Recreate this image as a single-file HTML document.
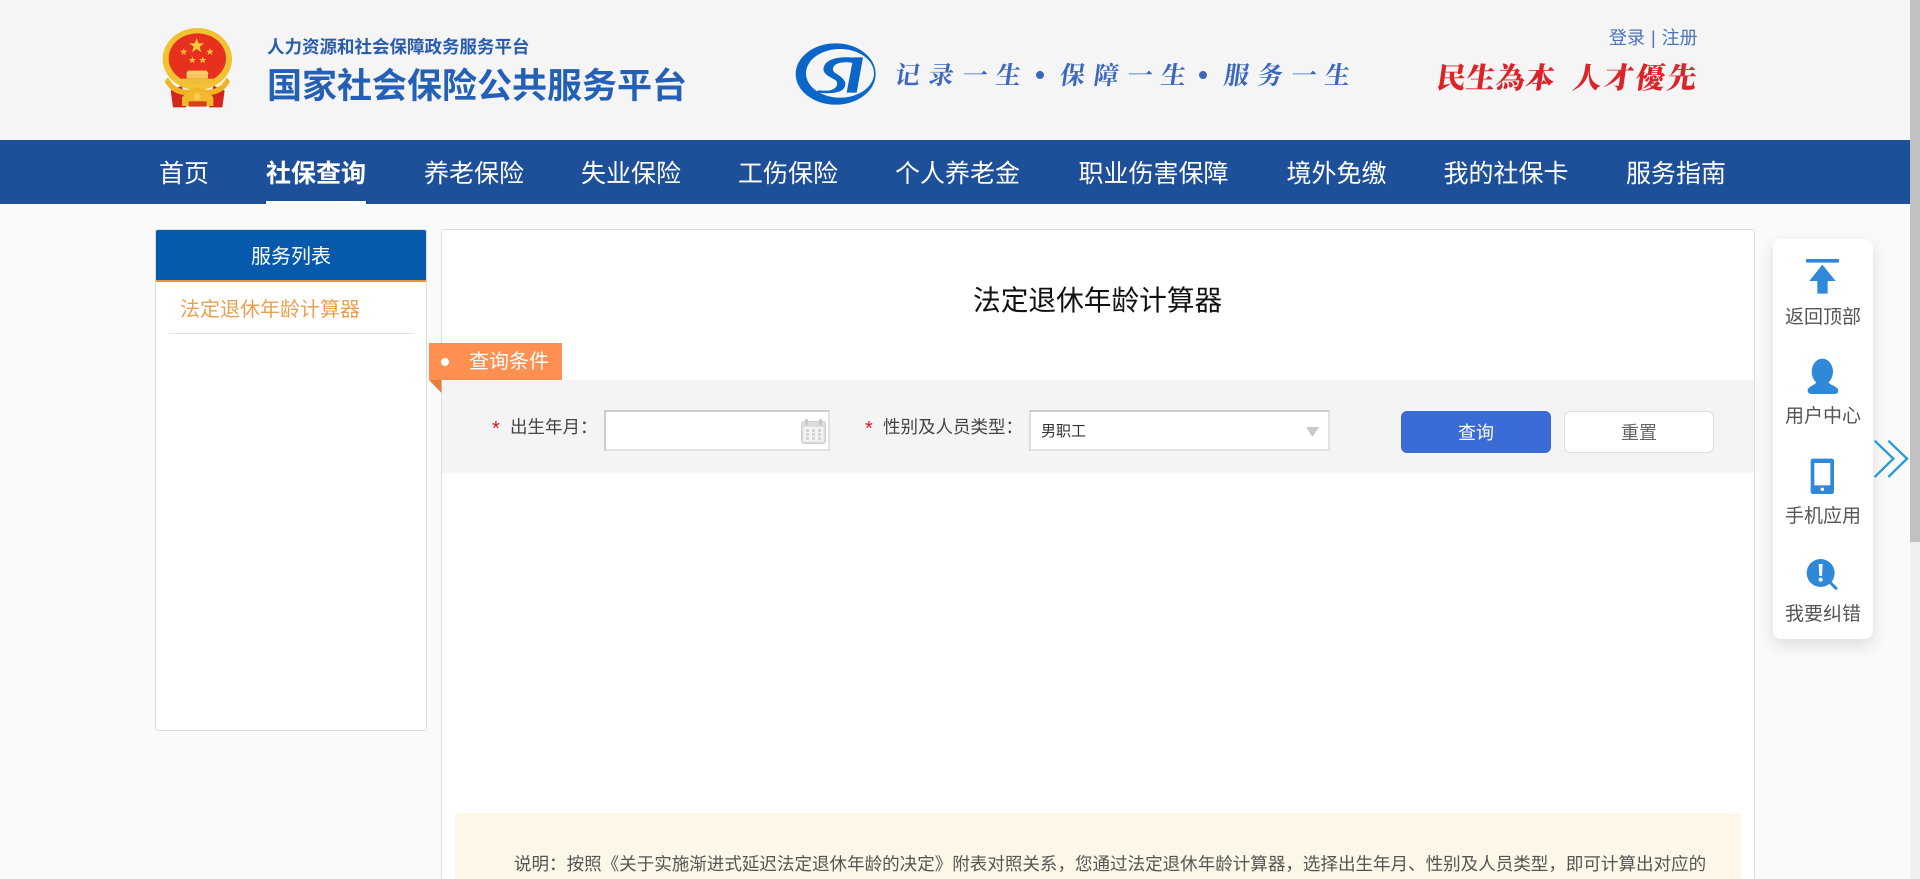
<!DOCTYPE html>
<html lang="zh-CN">
<head>
<meta charset="utf-8">
<title>法定退休年龄计算器</title>
<style>
html,body{margin:0;padding:0;width:1920px;height:879px;overflow:hidden;background:#fafafa;}
body{position:relative;font-family:"Liberation Sans","Noto Sans CJK SC",sans-serif;color:#444;}
.a{position:absolute;box-sizing:border-box;}
.t{position:absolute;white-space:nowrap;line-height:1;}
.n{top:162px;font-size:25px;color:#fff;}
.sl{top:64px;font-size:25px;font-weight:700;color:#3d68bf;font-family:'Liberation Serif','Noto Serif CJK SC',serif;letter-spacing:8.7px;transform:skewX(-8deg);}
.rd{top:65px;font-size:29px;font-weight:900;color:#dd2228;font-family:'Liberation Serif','Noto Serif CJK TC',serif;transform:skewX(-8deg);}
svg{position:absolute;overflow:visible;display:block;}
</style>
</head>
<body>
<!-- header -->
<div class="a" style="left:0;top:0;width:1920px;height:140px;background:#f5f5f5;"></div>

<!-- emblem -->
<svg style="left:158px;top:24px;" width="80" height="88" viewBox="0 0 240 264">
  <path d="M38 200 L72 185 L85 250 L45 250Z" fill="#d5261c"/>
  <path d="M200 200 L166 185 L153 250 L193 250Z" fill="#d5261c"/>
  <ellipse cx="118" cy="105" rx="104" ry="93" fill="#f1c232"/>
  <ellipse cx="118" cy="103" rx="86" ry="75" fill="#e8301f"/>
  <polygon points="116,42 122,58 139,58 125,68 130,85 116,75 102,85 107,68 93,58 110,58" fill="#f6c93b"/>
  <polygon points="77,72 80,80 88,80 82,85 84,93 77,88 70,93 72,85 66,80 74,80" fill="#f3bd35"/>
  <polygon points="156,72 159,80 167,80 161,85 163,93 156,88 149,93 151,85 145,80 153,80" fill="#f3bd35"/>
  <polygon points="103,97 106,105 114,105 108,110 110,118 103,113 96,118 98,110 92,105 100,105" fill="#f3bd35"/>
  <polygon points="134,97 137,105 145,105 139,110 141,118 134,113 127,118 129,110 123,105 131,105" fill="#f3bd35"/>
  <path d="M90 140 H146 L152 150 H84Z" fill="#f6cf6a"/>
  <rect x="86" y="150" width="64" height="14" fill="#f4c75e"/>
  <rect x="70" y="164" width="96" height="14" fill="#f3bd3c"/>
  <path d="M30 160 C55 205 95 200 118 191 C142 200 182 205 206 160 L216 173 C190 220 145 217 118 209 C92 217 46 220 20 173Z" fill="#eeb426"/>
  <path d="M72 220 C90 196 150 196 166 220 L166 246 H72Z" fill="#f1ba2c"/>
  <path d="M92 232 H146 V248 H92Z" fill="#dd3a20"/>
  <circle cx="118" cy="218" r="10" fill="#f6cc55"/>
</svg>

<div class="t" style="left:267px;top:39px;font-size:17.5px;font-weight:700;color:#2a5cae;">人力资源和社会保障政务服务平台</div>
<div class="t" style="left:267px;top:69px;font-size:35px;font-weight:700;color:#2460b6;">国家社会保险公共服务平台</div>

<!-- SI logo -->
<svg style="left:790px;top:39px;" width="95" height="75" viewBox="0 0 285 225">
  <path fill-rule="evenodd" d="M17 105 A120 92 0 1 0 257 105 A120 92 0 1 0 17 105Z M48 103 A102 73 0 1 1 252 103 A102 73 0 1 1 48 103Z" fill="#0a66c8"/>
  <path d="M192 56 C150 52 112 58 102 82 C94 104 118 112 134 122 C148 130 142 150 120 154 C108 156 90 154 84 154 L80 161 C110 164 148 164 160 150 C178 128 152 112 136 102 C122 92 128 72 160 70 C172 69 182 70 188 72Z" fill="#0a66c8"/>
  <path d="M190 55 L219 55 L200 161 L170 161Z" fill="#0a66c8"/>
</svg>
<div class="t sl" style="left:895px;">记录一生</div>
<div class="a" style="left:1036px;top:71px;width:8px;height:8px;border-radius:50%;background:#3d68bf;"></div>
<div class="t sl" style="left:1060px;">保障一生</div>
<div class="a" style="left:1199px;top:71px;width:8px;height:8px;border-radius:50%;background:#3d68bf;"></div>
<div class="t sl" style="left:1224px;">服务一生</div>

<div class="t rd" style="left:1437px;letter-spacing:.5px;">民生為本</div>
<div class="t rd" style="left:1573px;letter-spacing:2.5px;">人才優先</div>

<div class="t" style="left:1609px;top:29px;font-size:18px;color:#4a72bd;word-spacing:1px;">登录 | 注册</div>

<!-- nav -->
<div class="a" style="left:0;top:140px;width:1920px;height:64px;background:#1e4f99;"></div>
<div class="t n" style="left:159px;">首页</div>
<div class="t n" style="left:266px;font-weight:700;">社保查询</div>
<div class="a" style="left:266px;top:201px;width:100px;height:3px;background:#fff;"></div>
<div class="t n" style="left:424px;">养老保险</div>
<div class="t n" style="left:581px;">失业保险</div>
<div class="t n" style="left:738px;">工伤保险</div>
<div class="t n" style="left:895px;">个人养老金</div>
<div class="t n" style="left:1078.5px;">职业伤害保障</div>
<div class="t n" style="left:1286.5px;">境外免缴</div>
<div class="t n" style="left:1443.5px;">我的社保卡</div>
<div class="t n" style="left:1626px;">服务指南</div>

<!-- sidebar -->
<div class="a" style="left:155px;top:229px;width:272px;height:502px;background:#fff;border:1px solid #ddd;border-radius:3px;"></div>
<div class="a" style="left:156px;top:230px;width:270px;height:50px;background:#0759ac;border-radius:2px 2px 0 0;"></div>
<div class="a" style="left:156px;top:280px;width:270px;height:2px;background:#e09a3c;"></div>
<div class="t" style="left:251px;top:247px;font-size:20px;color:#fff;">服务列表</div>
<div class="t" style="left:180px;top:300px;font-size:20px;color:#e8a050;">法定退休年龄计算器</div>
<div class="a" style="left:169px;top:333px;width:245px;height:1px;background:#e2e2e2;"></div>

<!-- main -->
<div class="a" style="left:441px;top:229px;width:1314px;height:670px;background:#fff;border:1px solid #ddd;border-radius:3px;"></div>
<div class="t" style="left:973px;top:287px;font-size:27.7px;color:#111;">法定退休年龄计算器</div>

<div class="a" style="left:442px;top:380px;width:1312px;height:93px;background:#f4f4f4;"></div>
<div class="a" style="left:429px;top:343px;width:133px;height:37px;background:#ff9052;"></div>
<svg style="left:429px;top:380px;" width="13" height="13" viewBox="0 0 13 13"><polygon points="0,0 12.5,0 12.5,13" fill="#e67f37"/></svg>
<div class="a" style="left:441px;top:358px;width:8px;height:8px;border-radius:50%;background:#fff;"></div>
<div class="t" style="left:469px;top:352px;font-size:20px;color:#fff;">查询条件</div>

<div class="t" style="left:492px;top:419px;font-size:20px;color:#d9161c;">*</div>
<div class="t" style="left:510px;top:419px;font-size:17.5px;color:#444;">出生年月：</div>
<div class="a" style="left:604px;top:410px;width:226px;height:41px;background:#fff;border:2px solid #e2e2e2;border-top-color:#ccc;border-left-color:#ccc;"></div>
<svg style="left:801px;top:419px;" width="25" height="25" viewBox="0 0 25 25">
  <rect x="0.5" y="2.5" width="24" height="22" rx="2.5" fill="#dcdcdc" stroke="#cfcfcf"/>
  <rect x="2.5" y="8" width="20" height="14.5" fill="#f4f4f4"/>
  <rect x="4" y="0" width="3" height="6" rx="1" fill="#c8c8c8"/><rect x="18" y="0" width="3" height="6" rx="1" fill="#c8c8c8"/>
  <g fill="#d4d4d4"><rect x="5" y="10" width="3" height="3"/><rect x="11" y="10" width="3" height="3"/><rect x="17" y="10" width="3" height="3"/><rect x="5" y="14" width="3" height="3"/><rect x="11" y="14" width="3" height="3"/><rect x="17" y="14" width="3" height="3"/><rect x="5" y="18" width="3" height="3"/><rect x="11" y="18" width="3" height="3"/><rect x="17" y="18" width="3" height="3"/></g>
</svg>

<div class="t" style="left:865px;top:419px;font-size:20px;color:#d9161c;">*</div>
<div class="t" style="left:883px;top:419px;font-size:17.5px;color:#444;">性别及人员类型：</div>
<div class="a" style="left:1029px;top:410px;width:301px;height:41px;background:#fff;border:2px solid #e2e2e2;border-top-color:#ccc;border-left-color:#ddd;"></div>
<div class="t" style="left:1041px;top:424px;font-size:15px;color:#333;">男职工</div>
<svg style="left:1306px;top:427px;" width="13" height="10" viewBox="0 0 13 10"><polygon points="0,0 13,0 6.5,10" fill="#c9c9c9"/></svg>

<div class="a" style="left:1401px;top:411px;width:150px;height:42px;background:#3b6bd4;border-radius:6px;"></div>
<div class="t" style="left:1458px;top:424px;font-size:18px;color:#fff;">查询</div>
<div class="a" style="left:1564px;top:411px;width:150px;height:42px;background:#fff;border:1px solid #ddd;border-radius:6px;"></div>
<div class="t" style="left:1621px;top:424px;font-size:18px;color:#666;">重置</div>

<!-- notice -->
<div class="a" style="left:455px;top:813px;width:1286px;height:66px;background:#fdf7e7;"></div>
<div class="t" style="left:514px;top:856px;font-size:17.55px;color:#555;">说明：按照《关于实施渐进式延迟法定退休年龄的决定》附表对照关系，您通过法定退休年龄计算器，选择出生年月、性别及人员类型，即可计算出对应的</div>

<!-- floating panel -->
<div class="a" style="left:1773px;top:239px;width:100px;height:400px;background:#fff;border-radius:8px;box-shadow:0 6px 16px rgba(0,0,0,.12);"></div>
<svg style="left:1740px;top:220px;" width="180" height="440" viewBox="0 0 540 1320">
  <rect x="198" y="117" width="99" height="11" rx="3" fill="#2f88d8"/>
  <polygon points="247,134 287,183 263,183 263,221 232,221 232,183 208,183" fill="#2f88d8"/>
  <ellipse cx="247" cy="455" rx="32" ry="39" fill="#2f88d8"/>
  <path d="M232 480 H262 C266 498 295 497 295 512 Q295 522 283 522 H215 Q203 522 203 512 C203 497 228 498 232 480Z" fill="#2f88d8"/>
  <rect x="212" y="716" width="70" height="106" rx="7" fill="#2f88d8"/>
  <rect x="223" y="729" width="48" height="67" fill="#fff"/>
  <circle cx="247" cy="808" r="5" fill="#fff"/>
  <circle cx="242" cy="1059" r="42" fill="#2f88d8"/>
  <path d="M236 1032 H248 L246 1068 H238Z" fill="#fff"/>
  <circle cx="242" cy="1079" r="6" fill="#fff"/>
  <path d="M272 1089 L288 1105" stroke="#2f88d8" stroke-width="9" stroke-linecap="round"/>
  <path d="M404 662 L460 716 L404 771" fill="none" stroke="#2a9ad6" stroke-width="7"/>
  <path d="M445 662 L501 716 L445 771" fill="none" stroke="#2a9ad6" stroke-width="7"/>
</svg>
<div class="t" style="left:1785px;top:308px;font-size:19px;color:#555;">返回顶部</div>
<div class="t" style="left:1785px;top:407px;font-size:19px;color:#555;">用户中心</div>
<div class="t" style="left:1785px;top:507px;font-size:19px;color:#555;">手机应用</div>
<div class="t" style="left:1785px;top:605px;font-size:19px;color:#555;">我要纠错</div>

<!-- scrollbar -->
<div class="a" style="left:1910px;top:0;width:10px;height:879px;background:#efefef;"></div>
<div class="a" style="left:1910px;top:0;width:10px;height:542px;background:#c1c1c1;"></div>
</body>
</html>
